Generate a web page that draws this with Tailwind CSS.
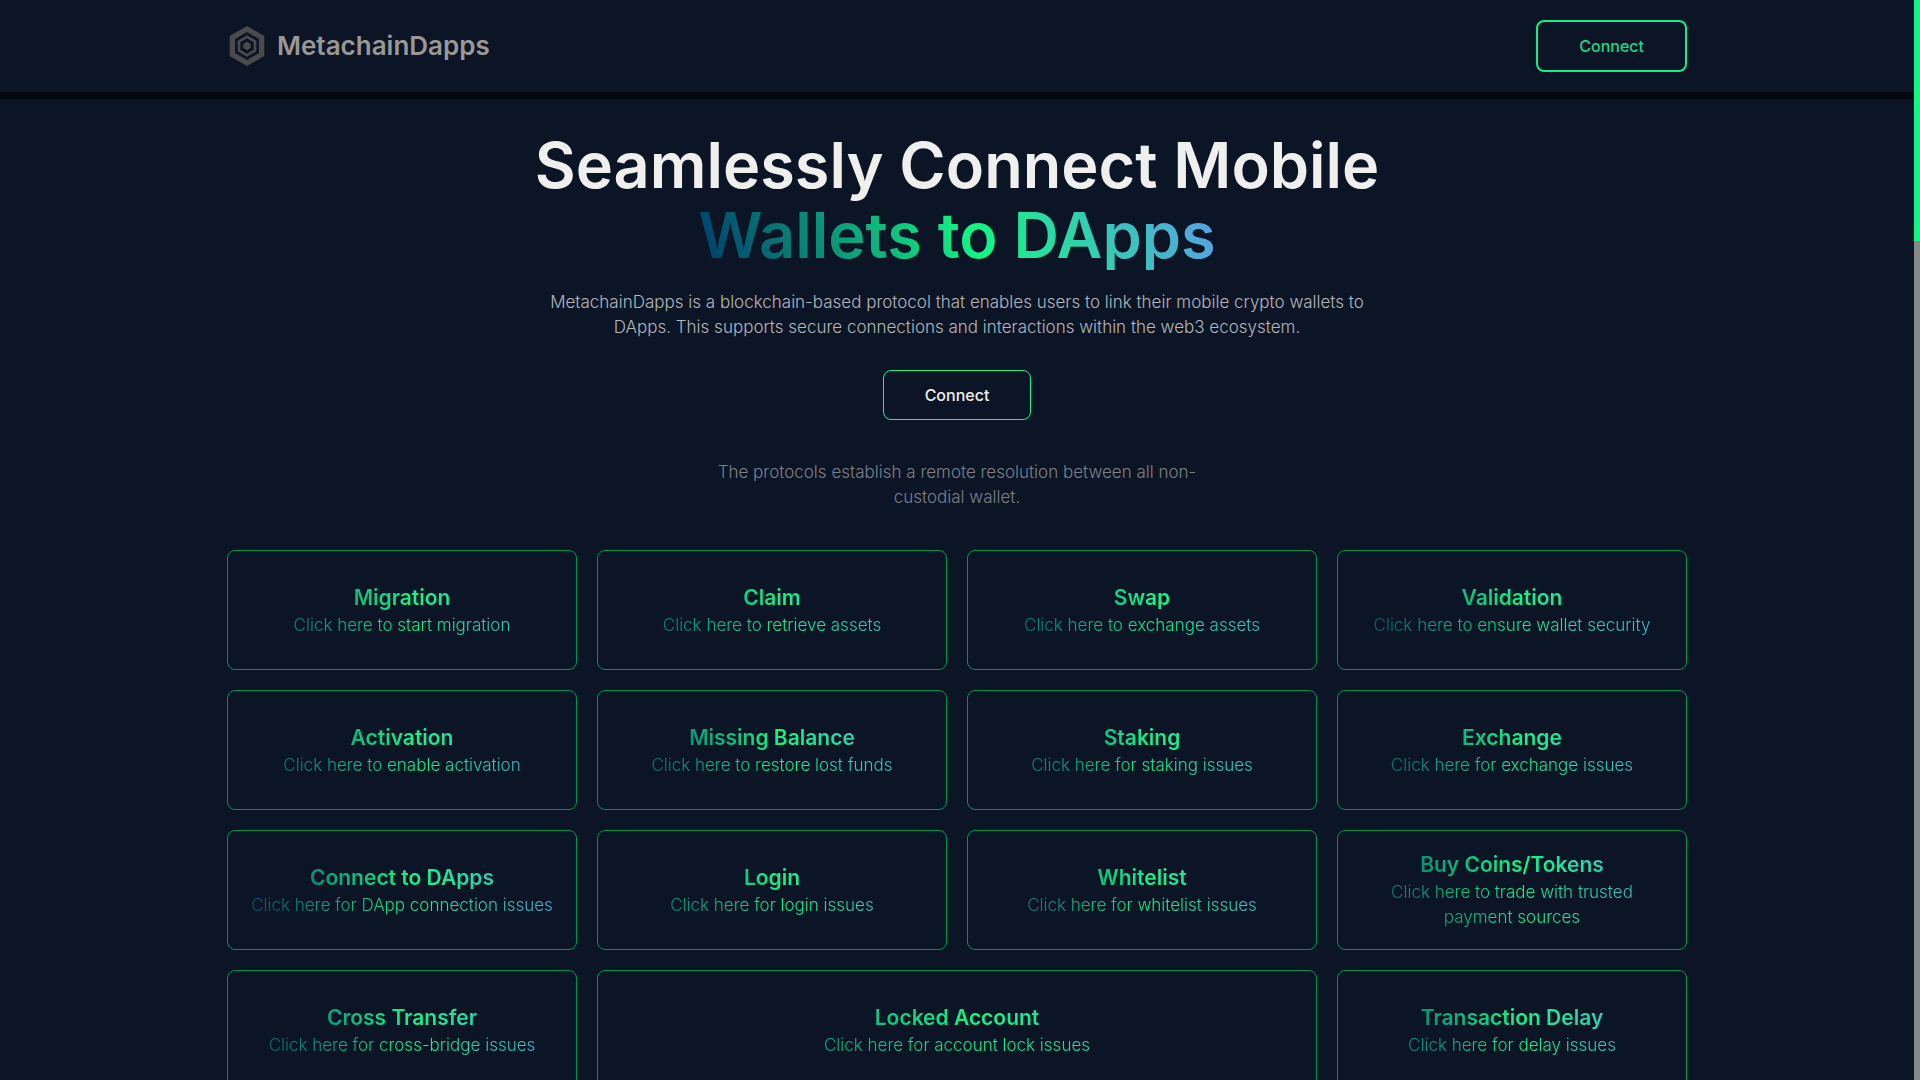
<!DOCTYPE html>
<html lang="en">
<head>
    <meta charset="UTF-8">
    <meta name="viewport" content="width=device-width, initial-scale=1.0">
    <title>MetachainDapps</title>
    <!-- Tailwind CSS -->
    <script src="https://cdn.jsdelivr.net/npm/@tailwindcss/browser@4"></script>
    <style>
        body {
            font-family: 'Inter', sans-serif;
        }
        .text-gradient {
            background-image: linear-gradient(68deg, #00386c 0%, #14f584 53%, #589fe6 100%);
            background-clip: text;
            -webkit-background-clip: text;
            color: transparent;
        }
    </style>
</head>
<body class="flex h-screen overflow-hidden bg-[#0c1526]">
    <div class="flex-1 min-w-0 overflow-hidden">
        <!-- Navigation -->
        <nav class="border-b-[7px] border-[#04080f]">
            <div class="max-w-[1460px] mx-auto flex items-center justify-between py-5">
                <a href="#" class="flex items-center gap-[10px]">
                    <svg class="w-10 h-10" viewBox="0 0 40 40" fill="#4b4b4b" aria-hidden="true">
                        <path fill-rule="evenodd" d="M20 0 37.300 10V30L20 40 2.700 30V10ZM20 6 8 13V27L20 34 32 27V13Z" />
                        <path fill-rule="evenodd" d="M20 9.300 29.300 14.700V25.300L20 30.700 10.700 25.300V14.700ZM20 12.300 13.300 16.200V23.800L20 27.700 26.700 23.800V16.200Z" />
                        <path d="M20 15.700 23.700 17.900V22.100L20 24.300 16.300 22.100V17.900Z" />
                    </svg>
                    <span class="text-[26px] leading-8 font-semibold text-[#999896]">MetachainDapps</span>
                </a>
                <button type="button" class="h-[52px] px-[41px] rounded-lg border-2 border-[#14ed82] text-base font-medium text-[#14d980]">Connect</button>
            </div>
        </nav>

        <!-- Hero -->
        <header class="flex flex-col items-center pt-[31px] text-center">
            <h1 class="text-[63px] leading-[70px] font-semibold text-[#efefed]">
                Seamlessly Connect Mobile<br>
                <span class="text-gradient inline-block">Wallets to DApps</span>
            </h1>
            <p class="mt-5 max-w-[850px] text-[17px] leading-[25px] font-light text-[#b4b6ba]">MetachainDapps is a blockchain-based protocol that enables users to link their mobile crypto wallets to DApps. This supports secure connections and interactions within the web3 ecosystem.</p>
            <button type="button" class="mt-[30px] h-[50px] px-[41px] rounded-lg border border-[#14f584] text-base font-medium text-[#efefed]">Connect</button>
            <p class="mt-10 max-w-[500px] text-[17px] leading-[25px] font-light text-[#7d8088]">The protocols establish a remote resolution between all non-custodial wallet.</p>
        </header>

        <!-- Services -->
        <main class="max-w-[1460px] mx-auto mt-10 grid grid-cols-4 gap-5 text-center">
            <a href="#" class="h-[120px] flex flex-col justify-center rounded-lg border border-[#00944a]">
                <h2 class="text-gradient px-5 text-[21px] leading-[30px] font-semibold">Migration</h2>
                <p class="text-gradient px-5 text-[17px] leading-[25px] font-light">Click here to start migration</p>
            </a>
            <a href="#" class="h-[120px] flex flex-col justify-center rounded-lg border border-[#00944a]">
                <h2 class="text-gradient px-5 text-[21px] leading-[30px] font-semibold">Claim</h2>
                <p class="text-gradient px-5 text-[17px] leading-[25px] font-light">Click here to retrieve assets</p>
            </a>
            <a href="#" class="h-[120px] flex flex-col justify-center rounded-lg border border-[#00944a]">
                <h2 class="text-gradient px-5 text-[21px] leading-[30px] font-semibold">Swap</h2>
                <p class="text-gradient px-5 text-[17px] leading-[25px] font-light">Click here to exchange assets</p>
            </a>
            <a href="#" class="h-[120px] flex flex-col justify-center rounded-lg border border-[#00944a]">
                <h2 class="text-gradient px-5 text-[21px] leading-[30px] font-semibold">Validation</h2>
                <p class="text-gradient px-5 text-[17px] leading-[25px] font-light">Click here to ensure wallet security</p>
            </a>
            <a href="#" class="h-[120px] flex flex-col justify-center rounded-lg border border-[#00944a]">
                <h2 class="text-gradient px-5 text-[21px] leading-[30px] font-semibold">Activation</h2>
                <p class="text-gradient px-5 text-[17px] leading-[25px] font-light">Click here to enable activation</p>
            </a>
            <a href="#" class="h-[120px] flex flex-col justify-center rounded-lg border border-[#00944a]">
                <h2 class="text-gradient px-5 text-[21px] leading-[30px] font-semibold">Missing Balance</h2>
                <p class="text-gradient px-5 text-[17px] leading-[25px] font-light">Click here to restore lost funds</p>
            </a>
            <a href="#" class="h-[120px] flex flex-col justify-center rounded-lg border border-[#00944a]">
                <h2 class="text-gradient px-5 text-[21px] leading-[30px] font-semibold">Staking</h2>
                <p class="text-gradient px-5 text-[17px] leading-[25px] font-light">Click here for staking issues</p>
            </a>
            <a href="#" class="h-[120px] flex flex-col justify-center rounded-lg border border-[#00944a]">
                <h2 class="text-gradient px-5 text-[21px] leading-[30px] font-semibold">Exchange</h2>
                <p class="text-gradient px-5 text-[17px] leading-[25px] font-light">Click here for exchange issues</p>
            </a>
            <a href="#" class="h-[120px] flex flex-col justify-center rounded-lg border border-[#00944a]">
                <h2 class="text-gradient px-5 text-[21px] leading-[30px] font-semibold">Connect to DApps</h2>
                <p class="text-gradient px-5 text-[17px] leading-[25px] font-light">Click here for DApp connection issues</p>
            </a>
            <a href="#" class="h-[120px] flex flex-col justify-center rounded-lg border border-[#00944a]">
                <h2 class="text-gradient px-5 text-[21px] leading-[30px] font-semibold">Login</h2>
                <p class="text-gradient px-5 text-[17px] leading-[25px] font-light">Click here for login issues</p>
            </a>
            <a href="#" class="h-[120px] flex flex-col justify-center rounded-lg border border-[#00944a]">
                <h2 class="text-gradient px-5 text-[21px] leading-[30px] font-semibold">Whitelist</h2>
                <p class="text-gradient px-5 text-[17px] leading-[25px] font-light">Click here for whitelist issues</p>
            </a>
            <a href="#" class="h-[120px] flex flex-col justify-center rounded-lg border border-[#00944a]">
                <h2 class="text-gradient px-5 text-[21px] leading-[30px] font-semibold">Buy Coins/Tokens</h2>
                <p class="text-gradient px-5 text-[17px] leading-[25px] font-light">Click here to trade with trusted payment sources</p>
            </a>
            <a href="#" class="h-[120px] flex flex-col justify-center rounded-lg border border-[#00944a]">
                <h2 class="text-gradient px-5 text-[21px] leading-[30px] font-semibold">Cross Transfer</h2>
                <p class="text-gradient px-5 text-[17px] leading-[25px] font-light">Click here for cross-bridge issues</p>
            </a>
            <a href="#" class="col-span-2 h-[120px] flex flex-col justify-center rounded-lg border border-[#00944a]">
                <h2 class="text-gradient px-5 text-[21px] leading-[30px] font-semibold">Locked Account</h2>
                <p class="text-gradient px-5 text-[17px] leading-[25px] font-light">Click here for account lock issues</p>
            </a>
            <a href="#" class="h-[120px] flex flex-col justify-center rounded-lg border border-[#00944a]">
                <h2 class="text-gradient px-5 text-[21px] leading-[30px] font-semibold">Transaction Delay</h2>
                <p class="text-gradient px-5 text-[17px] leading-[25px] font-light">Click here for delay issues</p>
            </a>
        </main>
    </div>

    <!-- Scroll track -->
    <div class="w-[6px] shrink-0 bg-[#888888]">
        <div class="h-[241px] bg-[#14f584]"></div>
    </div>
</body>
</html>
